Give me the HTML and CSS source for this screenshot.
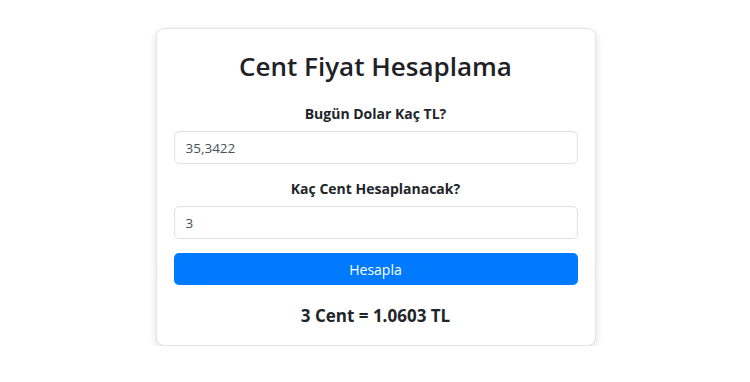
FILE: index.html
```html
<!DOCTYPE html>
<html lang="tr">
<head>
    <meta charset="UTF-8">
    <meta name="viewport" content="width=device-width, initial-scale=1.0">
    <title>Cent Fiyat Hesaplama</title>
    <link rel="stylesheet" href="styles.css">
</head>
<body>
    <div class="container">
        <h1>Cent Fiyat Hesaplama</h1>

        <div class="field">
            <label for="dolar">Bugün Dolar Kaç TL?</label>
            <input type="text" id="dolar" value="35,3422">
        </div>

        <div class="field">
            <label for="cent">Kaç Cent Hesaplanacak?</label>
            <input type="text" id="cent" value="3">
        </div>

        <button onclick="hesapla()">Hesapla</button>

        <div class="result" id="sonuc">3 Cent = 1.0603 TL</div>
    </div>

    <script>
        function hesapla() {
            const dolar = parseFloat(document.getElementById('dolar').value.replace(',', '.'));
            const cent = parseFloat(document.getElementById('cent').value.replace(',', '.'));
            const tl = (cent / 100) * dolar;
            document.getElementById('sonuc').textContent = cent + ' Cent = ' + tl.toFixed(4) + ' TL';
        }
    </script>
</body>
</html>
```

FILE: styles.css
```css
body {
    background-color: #fff;
    color: #212529;
    font-family: 'Open Sans', 'Noto Sans', sans-serif;
    margin: 0;
    padding: 28px 0 0 1px;
}
.container {
    box-sizing: border-box;
    width: 440px;
    margin: 0 auto;
    padding: 22px 17px 17px;
    border: 1px solid #e3e3e3;
    border-radius: 8px;
    background-color: #fff;
    box-shadow: 0 3px 8px rgba(0, 0, 0, 0.12);
    text-align: center;
}
h1 {
    font-size: 26px;
    font-weight: 600;
    line-height: 31px;
    margin: 0 0 21px;
    color: #1e2125;
}
.field {
    margin-bottom: 14px;
}
label {
    display: block;
    font-size: 14px;
    font-weight: 700;
    line-height: 21px;
    margin-bottom: 7px;
}
input[type="text"] {
    box-sizing: border-box;
    display: block;
    width: 100%;
    height: 33px;
    padding: 0 11px;
    font-family: inherit;
    font-size: 13.5px;
    color: #495057;
    border: 1px solid #dfe2e5;
    border-radius: 5px;
}
button {
    display: block;
    width: 100%;
    height: 32px;
    background-color: #007bff;
    color: #fff;
    font-family: inherit;
    font-size: 14px;
    border: none;
    border-radius: 5px;
    cursor: pointer;
}
button:hover {
    background-color: #0069d9;
}
.result {
    margin-top: 19px;
    font-size: 17px;
    font-weight: 700;
    line-height: 24px;
}
```
